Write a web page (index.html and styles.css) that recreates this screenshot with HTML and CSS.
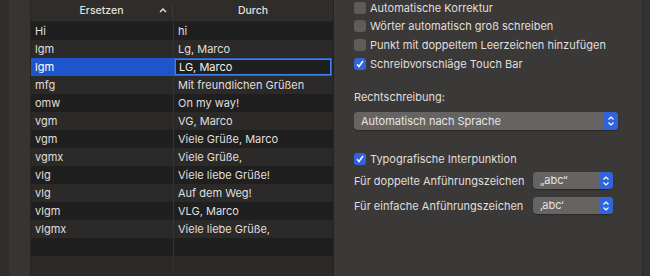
FILE: index.html
```html
<!DOCTYPE html>
<html lang="de">
<head>
    <meta charset="UTF-8">
    <title>Text</title>
    <link rel="stylesheet" href="styles.css">
</head>
<body>
    <div class="win">
        <div class="side-a"></div>
        <div class="side-b"></div>

        <!-- Ersetzungstabelle -->
        <div class="table">
            <div class="thead">
                <div class="th th-left">Ersetzen <span class="caret">
                    <svg width="8" height="5" viewBox="0 0 8 5"><path d="M1 4l3-3 3 3" fill="none" stroke="#e6e6e6" stroke-width="1.4"/></svg>
                </span></div>
                <div class="th">Durch</div>
            </div>
            <div class="row"><div class="c1">Hi</div><div class="c2">hi</div></div>
            <div class="row"><div class="c1">lgm</div><div class="c2">Lg, Marco</div></div>
            <div class="row sel"><div class="c1">lgm</div><div class="c2"><span class="edit">LG, Marco</span></div></div>
            <div class="row"><div class="c1">mfg</div><div class="c2">Mit freundlichen Grüßen</div></div>
            <div class="row"><div class="c1">omw</div><div class="c2">On my way!</div></div>
            <div class="row"><div class="c1">vgm</div><div class="c2">VG, Marco</div></div>
            <div class="row"><div class="c1">vgm</div><div class="c2">Viele Grüße, Marco</div></div>
            <div class="row"><div class="c1">vgmx</div><div class="c2">Viele Grüße,</div></div>
            <div class="row"><div class="c1">vlg</div><div class="c2">Viele liebe Grüße!</div></div>
            <div class="row"><div class="c1">vlg</div><div class="c2">Auf dem Weg!</div></div>
            <div class="row"><div class="c1">vlgm</div><div class="c2">VLG, Marco</div></div>
            <div class="row"><div class="c1">vlgmx</div><div class="c2">Viele liebe Grüße,</div></div>
            <div class="row"><div class="c1"></div><div class="c2"></div></div>
            <div class="row"><div class="c1"></div><div class="c2"></div></div>
        </div>

        <!-- Optionen -->
        <div class="opts">
            <label class="chk"><span class="box"></span>Automatische Korrektur</label>
            <label class="chk"><span class="box"></span>Wörter automatisch groß schreiben</label>
            <label class="chk"><span class="box"></span>Punkt mit doppeltem Leerzeichen hinzufügen</label>
            <label class="chk"><span class="box on"><svg width="10" height="10" viewBox="0 0 10 10"><path d="M2 5.2l2 2.3L8 2" fill="none" stroke="#fff" stroke-width="1.5"/></svg></span>Schreibvorschläge Touch Bar</label>

            <div class="lbl">Rechtschreibung:</div>
            <div class="popup wide"><span class="pv">Automatisch nach Sprache</span><span class="step">
                <svg width="8" height="12" viewBox="0 0 8 12"><path d="M1.5 4.5L4 2l2.5 2.5M1.5 7.5L4 10l2.5-2.5" fill="none" stroke="#fff" stroke-width="1.2"/></svg>
            </span></div>

            <label class="chk typo"><span class="box on"><svg width="10" height="10" viewBox="0 0 10 10"><path d="M2 5.2l2 2.3L8 2" fill="none" stroke="#fff" stroke-width="1.5"/></svg></span>Typografische Interpunktion</label>
            <div class="qrow">
                <span class="ql">Für doppelte Anführungszeichen</span>
                <div class="popup small"><span class="pv">„abc“</span><span class="step">
                    <svg width="8" height="12" viewBox="0 0 8 12"><path d="M1.5 4.5L4 2l2.5 2.5M1.5 7.5L4 10l2.5-2.5" fill="none" stroke="#fff" stroke-width="1.2"/></svg>
                </span></div>
            </div>
            <div class="qrow">
                <span class="ql">Für einfache Anführungszeichen</span>
                <div class="popup small"><span class="pv">‚abc‘</span><span class="step">
                    <svg width="8" height="12" viewBox="0 0 8 12"><path d="M1.5 4.5L4 2l2.5 2.5M1.5 7.5L4 10l2.5-2.5" fill="none" stroke="#fff" stroke-width="1.2"/></svg>
                </span></div>
            </div>
        </div>

        <div class="edge"></div>
    </div>
</body>
</html>
```

FILE: styles.css
```css
body {
    margin: 0;
    background-color: #3a3937;
    font-family: Inter, "Noto Sans", "Liberation Sans", sans-serif;
    font-size: 11px;
    color: #e0dfdd;
}

.win {
    display: flex;
    height: 276px;
    overflow: hidden;
}

.side-a {
    width: 9px;
    background-color: #2e2d2b;
}

.side-b {
    width: 21px;
    background-color: #363533;
    border-right: 1px solid #272624;
}

.table {
    width: 302px;
    background-color: #2b2a29;
    border-right: 1px solid #242321;
}

.thead {
    display: flex;
    height: 21px;
    background-color: #2f2c29;
    border-bottom: 1px solid #242321;
}

.th {
    flex: 1;
    display: flex;
    align-items: center;
    justify-content: center;
    font-size: 10.5px;
    font-weight: 500;
    color: #e2e1df;
}
.th-left {
    flex: 0 0 141px;
    position: relative;
    border-right: 1px solid #3a3835;
    margin: 3px 0;
}

.caret {
    position: absolute;
    right: 5px;
    top: 5px;
    display: flex;
}

.row {
    display: flex;
    height: 18px;
    line-height: 18px;
    background-color: #1f1f1f;
}
.row:nth-child(odd) {
    background-color: #2b2a29;
}

.c1 {
    flex: 0 0 138px;
    padding-left: 4px;
    border-right: 1px solid #353432;
}
.c2 {
    flex: 1;
    padding-left: 4px;
}

.row.sel {
    background-color: #1f55cc;
    color: #fff;
}
.row.sel .c1 {
    border-right-color: #1f55cc;
}
.row.sel .c2 {
    background-color: #1f1f1f;
    padding: 1px 2px 1px 1px;
}
.edit {
    display: block;
    height: 14px;
    line-height: 14px;
    padding-left: 3px;
    border: 1px solid #3b82f0;
    box-shadow: 0 0 0 1px #2a64c8;
    color: #f0f0f0;
}

.opts {
    flex: 1;
    padding: 0 0 0 20px;
    display: flex;
    flex-direction: column;
}

.chk {
    display: flex;
    align-items: center;
    height: 19px;
    white-space: nowrap;
}
.chk:first-child {
    margin-top: -2px;
    margin-bottom: -1px;
}

.box {
    flex: 0 0 12px;
    height: 12px;
    border-radius: 3px;
    background-color: #5e5d5b;
    margin-right: 4px;
    display: flex;
    align-items: center;
    justify-content: center;
}
.box.on {
    background-color: #2f64dc;
}

.lbl {
    margin-top: 16px;
    height: 17px;
    line-height: 17px;
}

.popup {
    display: flex;
    height: 18px;
    border-radius: 4px;
    background-color: #656462;
    overflow: hidden;
    box-shadow: 0 1px 1px rgba(0, 0, 0, .3);
}
.popup.wide {
    width: 264px;
    margin-top: 6px;
}
.popup.small {
    flex: 0 0 80px;
    height: 17px;
}

.pv {
    flex: 1;
    padding-left: 7px;
    line-height: 18px;
    color: #e6e5e3;
}
.popup.small .pv {
    line-height: 17px;
}

.step {
    width: 14px;
    background-color: #2f64dc;
    display: flex;
    align-items: center;
    justify-content: center;
}

.typo {
    margin-top: 19px;
}

.qrow {
    display: flex;
    align-items: center;
    margin-top: 4px;
}
.qrow + .qrow {
    margin-top: 8px;
}
.ql {
    flex: 0 0 179px;
    white-space: nowrap;
}

.edge {
    width: 7px;
    background-color: #333230;
    border-left: 1px solid #2a2927;
}
```
